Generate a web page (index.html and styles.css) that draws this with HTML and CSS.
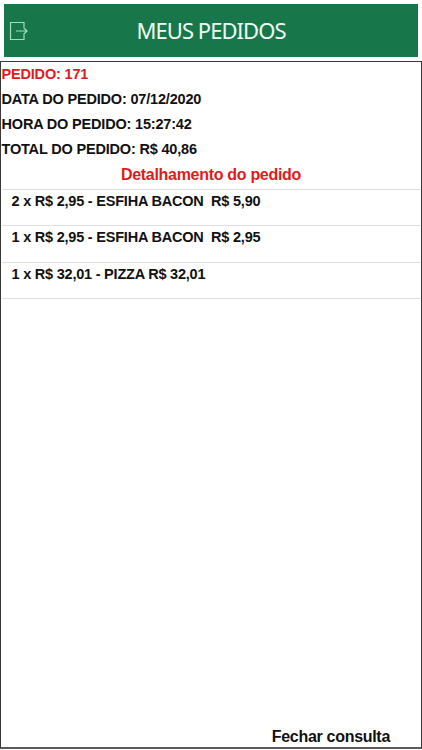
FILE: index.html
```html
<!DOCTYPE html>
<html lang="pt-BR">
<head>
    <meta charset="UTF-8">
    <meta name="viewport" content="width=device-width, initial-scale=1.0">
    <title>Meus Pedidos</title>
    <link rel="stylesheet" href="styles.css">
</head>
<body>
    <!-- Topo -->
    <header>
        <a href="#sair" class="sair" aria-label="Sair">
            <svg width="20" height="20" viewBox="0 0 20 20">
                <path d="M15 6V1.5H1.5V18.5H15V14M7 10H18M14.5 6.5L18 10L14.5 13.5"/>
            </svg>
        </a>
        <h1>MEUS PEDIDOS</h1>
    </header>

    <!-- Pedido -->
    <main>
        <section class="resumo">
            <p class="numero">PEDIDO: 171</p>
            <p class="data">DATA DO PEDIDO: 07/12/2020</p>
            <p class="hora">HORA DO PEDIDO: 15:27:42</p>
            <p class="total">TOTAL DO PEDIDO: R$ 40,86</p>
        </section>
        <h2>Detalhamento do pedido</h2>
        <ul class="itens">
            <li>2 x R$ 2,95 - ESFIHA BACON&nbsp; R$ 5,90</li>
            <li>1 x R$ 2,95 - ESFIHA BACON&nbsp; R$ 2,95</li>
            <li>1 x R$ 32,01 - PIZZA R$ 32,01</li>
        </ul>
        <a href="#fechar" class="fechar">Fechar consulta</a>
    </main>
</body>
</html>
```
FILE: styles.css
```css
* {
    box-sizing: border-box;
    margin: 0;
    padding: 0;
}
body {
    display: flex;
    flex-direction: column;
    height: 750px;
    padding: 4px 0 1px;
    background-color: white;
    color: #111;
    font-family: "Liberation Sans", Arial, sans-serif;
    font-weight: bold;
    overflow: hidden;
}
header {
    display: grid;
    grid-template-columns: 40px 1fr 40px;
    align-items: center;
    height: 53px;
    margin: 0 4px 4px;
    background-color: #17774a;
}
.sair {
    display: flex;
    padding-left: 5px;
}
.sair path {
    fill: none;
    stroke: #a5dcbd;
    stroke-width: 1.2;
}
h1 {
    color: #effff5;
    font-family: "Noto Sans", sans-serif;
    font-size: 22px;
    font-weight: normal;
    letter-spacing: -0.95px;
    text-align: center;
    line-height: 53px;
}
main {
    display: flex;
    flex-direction: column;
    flex: 1;
    border: 1px solid #3a3a3a;
    border-bottom: 2px solid #5e5a5c;
}
.resumo {
    padding-left: 0.5px;
    font-size: 14.5px;
    letter-spacing: -0.18px;
    line-height: 25px;
}
.numero {
    color: #e01b1b;
}
h2 {
    color: #e01b1b;
    font-size: 16px;
    letter-spacing: -0.3px;
    line-height: 25px;
    text-align: center;
}
.itens {
    margin: 2px 1px 0;
    border-top: 1px solid #dcdcdc;
    list-style: none;
}
.itens li {
    height: 36.4px;
    padding-left: 9.5px;
    border-bottom: 1px solid #dedede;
    font-size: 14.5px;
    letter-spacing: -0.22px;
    line-height: 23px;
}
.fechar {
    align-self: flex-end;
    margin-top: auto;
    margin-right: 31px;
    color: #111;
    font-size: 16px;
    letter-spacing: -0.3px;
    line-height: 21px;
    text-decoration: none;
}
```
